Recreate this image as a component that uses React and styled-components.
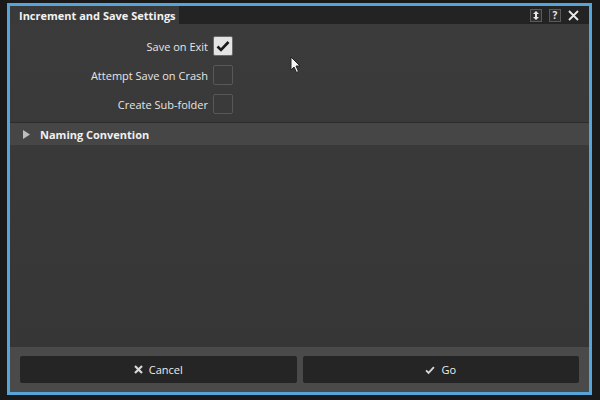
import React from "react";
import styled, { createGlobalStyle } from "styled-components";

const Global = createGlobalStyle`
  html, body { margin: 0; padding: 0; background: #1a1a1a; }
  body { font-family: "Open Sans", "DejaVu Sans", sans-serif; }
`;

const Screen = styled.div`
  width: 600px;
  height: 400px;
  padding: 3px 8px 5px 7px;
  box-sizing: border-box;
  background: #1a1a1a;
  position: relative;
`;

const Frame = styled.div`
  height: 100%;
  box-sizing: border-box;
  border: 3px solid #55a5da;
  display: flex;
  flex-direction: column;
  background: #393939;
`;

const TitleBar = styled.div`
  height: 18px;
  display: flex;
  align-items: stretch;
  background: #232323;
`;

const TitleTab = styled.div`
  width: 160px;
  padding-left: 9px;
  background: #3a3a3a;
  color: #f2f2f2;
  font-size: 11px;
  font-weight: 700;
  display: flex;
  align-items: center;
`;

const TitleTools = styled.div`
  margin-left: auto;
  display: flex;
  align-items: center;
  gap: 7px;
  padding-right: 10px;
`;

const ToolBox = styled.div`
  width: 10px;
  height: 11px;
  border: 1px solid #5a5a5a;
  background: #2e2e2e;
  color: #e8e8e8;
  font-size: 10px;
  font-weight: 700;
  display: flex;
  align-items: center;
  justify-content: center;
  line-height: 1;
`;

const Body = styled.div`
  flex: 1;
  display: flex;
  flex-direction: column;
  background: linear-gradient(#3b3b3b, #363636);
`;

const Options = styled.div`
  padding: 12px 0 8px;
  display: flex;
  flex-direction: column;
  gap: 9px;
`;

const OptionRow = styled.div`
  display: flex;
  align-items: center;
  gap: 5px;
  height: 20px;
`;

const Label = styled.div`
  width: 198px;
  text-align: right;
  color: #e6e6e6;
  font-size: 11px;
`;

const Box = styled.div`
  width: 18px;
  height: 18px;
  border: 1px solid ${(p) => (p.$checked ? "#6a6a6a" : "#585858")};
  background: ${(p) => (p.$checked ? "#e4e4e4" : "#3a3a3a")};
  border-radius: 2px;
  display: flex;
  align-items: center;
  justify-content: center;
`;

const Section = styled.div`
  border-top: 1px solid #2c2c2c;
  height: 22px;
  background: #464646;
  display: flex;
  align-items: center;
  padding-left: 13px;
  gap: 10px;
  color: #f0f0f0;
  font-size: 11px;
  font-weight: 700;
`;

const Footer = styled.div`
  height: 45px;
  background: #4a4a4a;
  display: flex;
  gap: 6px;
  padding: 9px 10px;
  box-sizing: border-box;
`;

const Button = styled.div`
  flex: 1;
  background: #252525;
  border-radius: 2px;
  color: #ececec;
  font-size: 11px;
  display: flex;
  align-items: center;
  justify-content: center;
  gap: 6px;
`;

const Cursor = styled.svg`
  position: absolute;
  left: 290px;
  top: 56px;
`;

function Check({ size = 14, color = "#1a1a1a" }) {
  return (
    <svg width={size} height={size} viewBox="0 0 14 14">
      <path d="M1.5 7.5 L5 11 L12.5 3" stroke={color} strokeWidth="2.6" fill="none" />
    </svg>
  );
}

const options = [
  { label: "Save on Exit", checked: true },
  { label: "Attempt Save on Crash", checked: false },
  { label: "Create Sub-folder", checked: false },
];

export default function App() {
  return (
    <>
      <Global />
      <Screen>
        <Frame>
          <TitleBar>
            <TitleTab>Increment and Save Settings</TitleTab>
            <TitleTools>
              <ToolBox>
                <svg width="6" height="9" viewBox="0 0 6 9">
                  <path d="M3 0 L6 3 H4 V6 H6 L3 9 L0 6 H2 V3 H0 Z" fill="#e8e8e8" />
                </svg>
              </ToolBox>
              <ToolBox>?</ToolBox>
              <svg width="11" height="11" viewBox="0 0 11 11">
                <path d="M1 1 L10 10 M10 1 L1 10" stroke="#e8e8e8" strokeWidth="1.8" />
              </svg>
            </TitleTools>
          </TitleBar>
          <Body>
            <Options>
              {options.map((o) => (
                <OptionRow key={o.label}>
                  <Label>{o.label}</Label>
                  <Box $checked={o.checked}>{o.checked && <Check />}</Box>
                </OptionRow>
              ))}
            </Options>
            <Section>
              <svg width="7" height="9" viewBox="0 0 7 9">
                <path d="M0 0 L7 4.5 L0 9 Z" fill="#bdbdbd" />
              </svg>
              Naming Convention
            </Section>
          </Body>
          <Footer>
            <Button>
              <svg width="9" height="9" viewBox="0 0 9 9">
                <path d="M1 1 L8 8 M8 1 L1 8" stroke="#d8d8d8" strokeWidth="2.2" />
              </svg>
              Cancel
            </Button>
            <Button>
              <Check size={10} color="#d8d8d8" />
              Go
            </Button>
          </Footer>
        </Frame>
        <Cursor width="12" height="18" viewBox="0 0 12 18">
          <path d="M1 1 V14 L4 11 L6.5 16.5 L8.5 15.5 L6 10 H10 Z" fill="#f4f4f4" stroke="#222" strokeWidth="1" />
        </Cursor>
      </Screen>
    </>
  );
}
